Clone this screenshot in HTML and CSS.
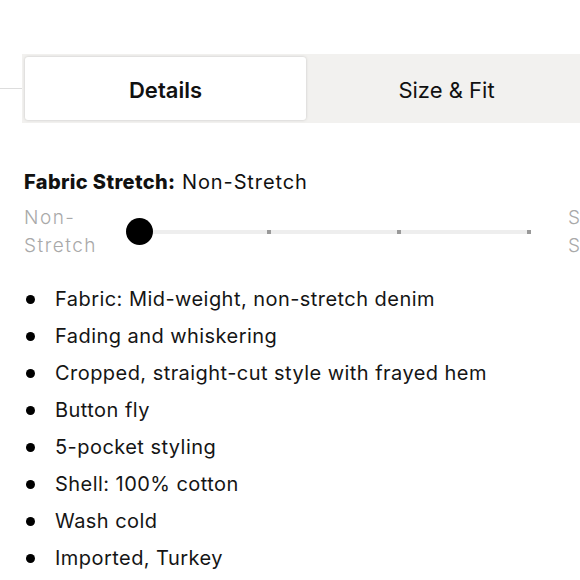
FILE: index.html
```html
<!DOCTYPE html>
<html>
<head>
<meta charset="utf-8">
<link rel="stylesheet" href="styles.css">
</head>
<body>
<div class="page">
  <div class="tabrow">
    <div class="tabline"></div>
    <div class="tabs">
      <div class="tab active">Details</div>
      <div class="tab">Size &amp; Fit</div>
    </div>
  </div>
  <div class="content">
    <div class="stretch-title"><b>Fabric Stretch:</b> Non-Stretch</div>
    <div class="slider">
      <div class="lab left">Non-<br>Stretch</div>
      <div class="track">
        <div class="bar"></div>
        <span class="knob"></span>
        <span class="tick t1"></span>
        <span class="tick t2"></span>
        <span class="tick t3"></span>
      </div>
      <div class="lab right">Super<br>Stretch</div>
    </div>
    <ul class="list">
      <li>Fabric: Mid-weight, non-stretch denim</li>
      <li>Fading and whiskering</li>
      <li>Cropped, straight-cut style with frayed hem</li>
      <li>Button fly</li>
      <li>5-pocket styling</li>
      <li>Shell: 100% cotton</li>
      <li>Wash cold</li>
      <li>Imported, Turkey</li>
    </ul>
  </div>
</div>
</body>
</html>
```
FILE: styles.css
```css
html, body { margin: 0; padding: 0; background: #fff; }
body { font-family: Inter, "Liberation Sans", sans-serif; color: #111; overflow: hidden; width: 580px; height: 580px; }
.page { width: 580px; position: relative; }
.tabrow { display: flex; align-items: center; margin-top: 54px; }
.tabline { width: 22px; height: 1px; background: #ddd; flex: none; }
.tabs { display: flex; background: #f2f1ef; padding: 3px; width: 562px; flex: none; height: 63px; }
.tab { width: 281px; flex: none; display: flex; align-items: center; justify-content: center; font-size: 22px; color: #111; padding-top: 3px; box-sizing: border-box; }
.active { background: #fff; font-weight: 600; border-radius: 3px; box-shadow: 0 0 3px rgba(0,0,0,0.18); }
.content { padding: 0 0 0 24px; }
.stretch-title { font-size: 20px; letter-spacing: 0.9px; margin-top: 46px; line-height: 26px; color: #111; }
.stretch-title b { font-weight: 800; letter-spacing: 0.35px; }
.slider { display: flex; align-items: center; margin-top: 8px; height: 58px; }
.lab { font-size: 19px; line-height: 28px; color: #a9a9a9; flex: none; letter-spacing: 1.5px; font-weight: 300; }
.left { width: 102px; }
.track { position: relative; width: 404px; height: 28px; flex: none; margin-right: 38px; }
.bar { position: absolute; left: 13px; right: 0; top: 12px; height: 4px; background: #eee; }
.knob { position: absolute; left: 0; top: 0; width: 27px; height: 27px; border-radius: 50%; background: #000; }
.tick { position: absolute; top: 12px; width: 4px; height: 4px; background: #999; }
.t1 { left: 141px; }
.t2 { left: 271px; }
.t3 { left: 401px; }
.list { list-style: none; margin: 20px 0 0 0; padding: 0; }
.list li { font-size: 20px; letter-spacing: 0.45px; line-height: 37px; height: 37px; position: relative; padding-left: 31px; color: #151515; }
.list li::before { content: ""; position: absolute; left: 2px; top: 14px; width: 9px; height: 9px; border-radius: 50%; background: #000; }
```
